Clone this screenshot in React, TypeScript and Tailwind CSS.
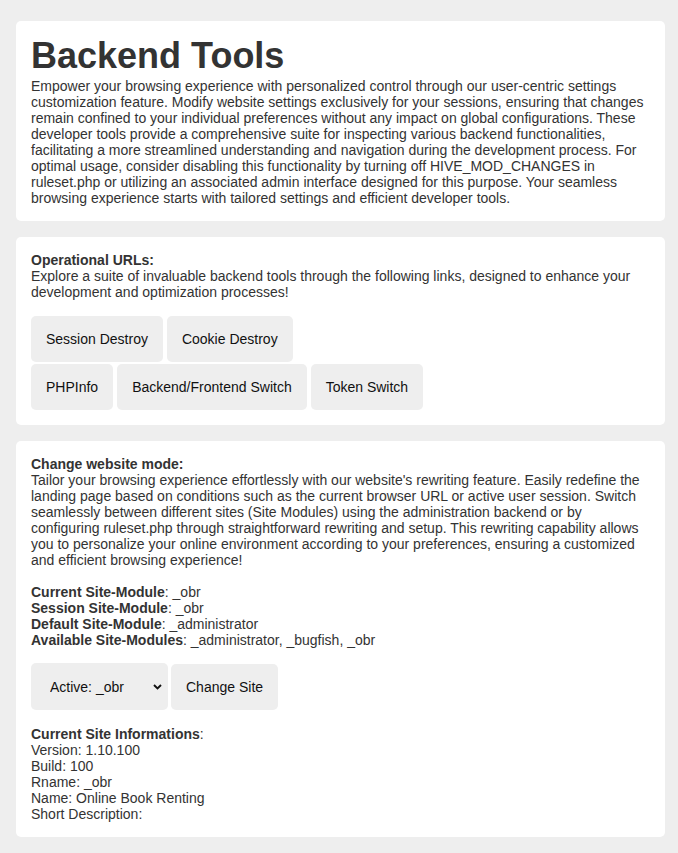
import { useState } from "react";

const font = { fontFamily: '"Liberation Sans", Arial, sans-serif' };

function Card({ children }: { children: React.ReactNode }) {
  return <div className="bg-white rounded-[5px] px-[15px] py-[15px]">{children}</div>;
}

function Btn({ children }: { children: React.ReactNode }) {
  return (
    <button className="bg-[#eeeeee] rounded-[5px] px-[15px] py-[15px] leading-[16px] text-[14px] text-[#111]">
      {children}
    </button>
  );
}

export default function App() {
  const [site, setSite] = useState("_obr");

  return (
    <div style={font} className="min-h-screen bg-[#eeeeee] pl-[16px] pr-[13px] pt-[21px] pb-[16px] text-[14px] leading-[16px] text-[#333]">
      <div className="flex flex-col gap-[16px]">
        <Card>
          <h1 className="text-[36px] font-bold leading-[40px] text-[#333]">Backend Tools</h1>
          <p className="mt-[2px]">
            Empower your browsing experience with personalized control through our user-centric settings
            customization feature. Modify website settings exclusively for your sessions, ensuring that changes
            remain confined to your individual preferences without any impact on global configurations. These
            developer tools provide a comprehensive suite for inspecting various backend functionalities,
            facilitating a more streamlined understanding and navigation during the development process. For
            optimal usage, consider disabling this functionality by turning off HIVE_MOD_CHANGES in
            <br />
            ruleset.php or utilizing an associated admin interface designed for this purpose. Your seamless browsing
            experience starts with tailored settings and efficient developer tools.
          </p>
        </Card>

        <Card>
          <p>
            <b>Operational URLs:</b>
            <br />
            Explore a suite of invaluable backend tools through the following links, designed to enhance your
            development and optimization processes!
          </p>
          <div className="mt-[16px] flex flex-col gap-[2px]">
            <div className="flex gap-[4px]">
              <Btn>Session Destroy</Btn>
              <Btn>Cookie Destroy</Btn>
            </div>
            <div className="flex gap-[4px]">
              <Btn>PHPInfo</Btn>
              <Btn>Backend/Frontend Switch</Btn>
              <Btn>Token Switch</Btn>
            </div>
          </div>
        </Card>

        <Card>
          <p>
            <b>Change website mode:</b>
            <br />
            Tailor your browsing experience effortlessly with our website's rewriting feature. Easily redefine the
            landing page based on conditions such as the current browser URL or active user session. Switch
            seamlessly between different sites (Site Modules) using the administration backend or by
            <br />
            configuring ruleset.php through straightforward rewriting and setup. This rewriting capability allows
            you to personalize your online environment according to your preferences, ensuring a customized
            <br />
            and efficient browsing experience!
          </p>
          <p className="mt-[16px]">
            <b>Current Site-Module</b>: _obr
            <br />
            <b>Session Site-Module</b>: _obr
            <br />
            <b>Default Site-Module</b>: _administrator
            <br />
            <b>Available Site-Modules</b>: _administrator, _bugfish, _obr
          </p>
          <div className="mt-[15px] flex items-center gap-[3px]">
            <div className="relative">
              <select
                value={site}
                onChange={(e) => setSite(e.target.value)}
                className="appearance-none bg-[#eeeeee] rounded-[5px] w-[137px] h-[47px] pl-[19px] pr-[30px] text-[14px] text-[#111] outline-none"
                style={font}
              >
                <option value="_administrator">Active: _administrator</option>
                <option value="_bugfish">Active: _bugfish</option>
                <option value="_obr">Active: _obr</option>
              </select>
              <svg
                className="pointer-events-none absolute right-[6px] top-[21px]"
                width="9"
                height="6"
                viewBox="0 0 9 6"
                fill="none"
              >
                <path d="M1 1 L4.5 4.5 L8 1" stroke="#111" strokeWidth="1.9" />
              </svg>
            </div>
            <Btn>Change Site</Btn>
          </div>
          <p className="mt-[16px]">
            <b>Current Site Informations</b>:
            <br />
            Version: 1.10.100
            <br />
            Build: 100
            <br />
            Rname: _obr
            <br />
            Name: Online Book Renting
            <br />
            Short Description:
          </p>
        </Card>
      </div>
    </div>
  );
}
